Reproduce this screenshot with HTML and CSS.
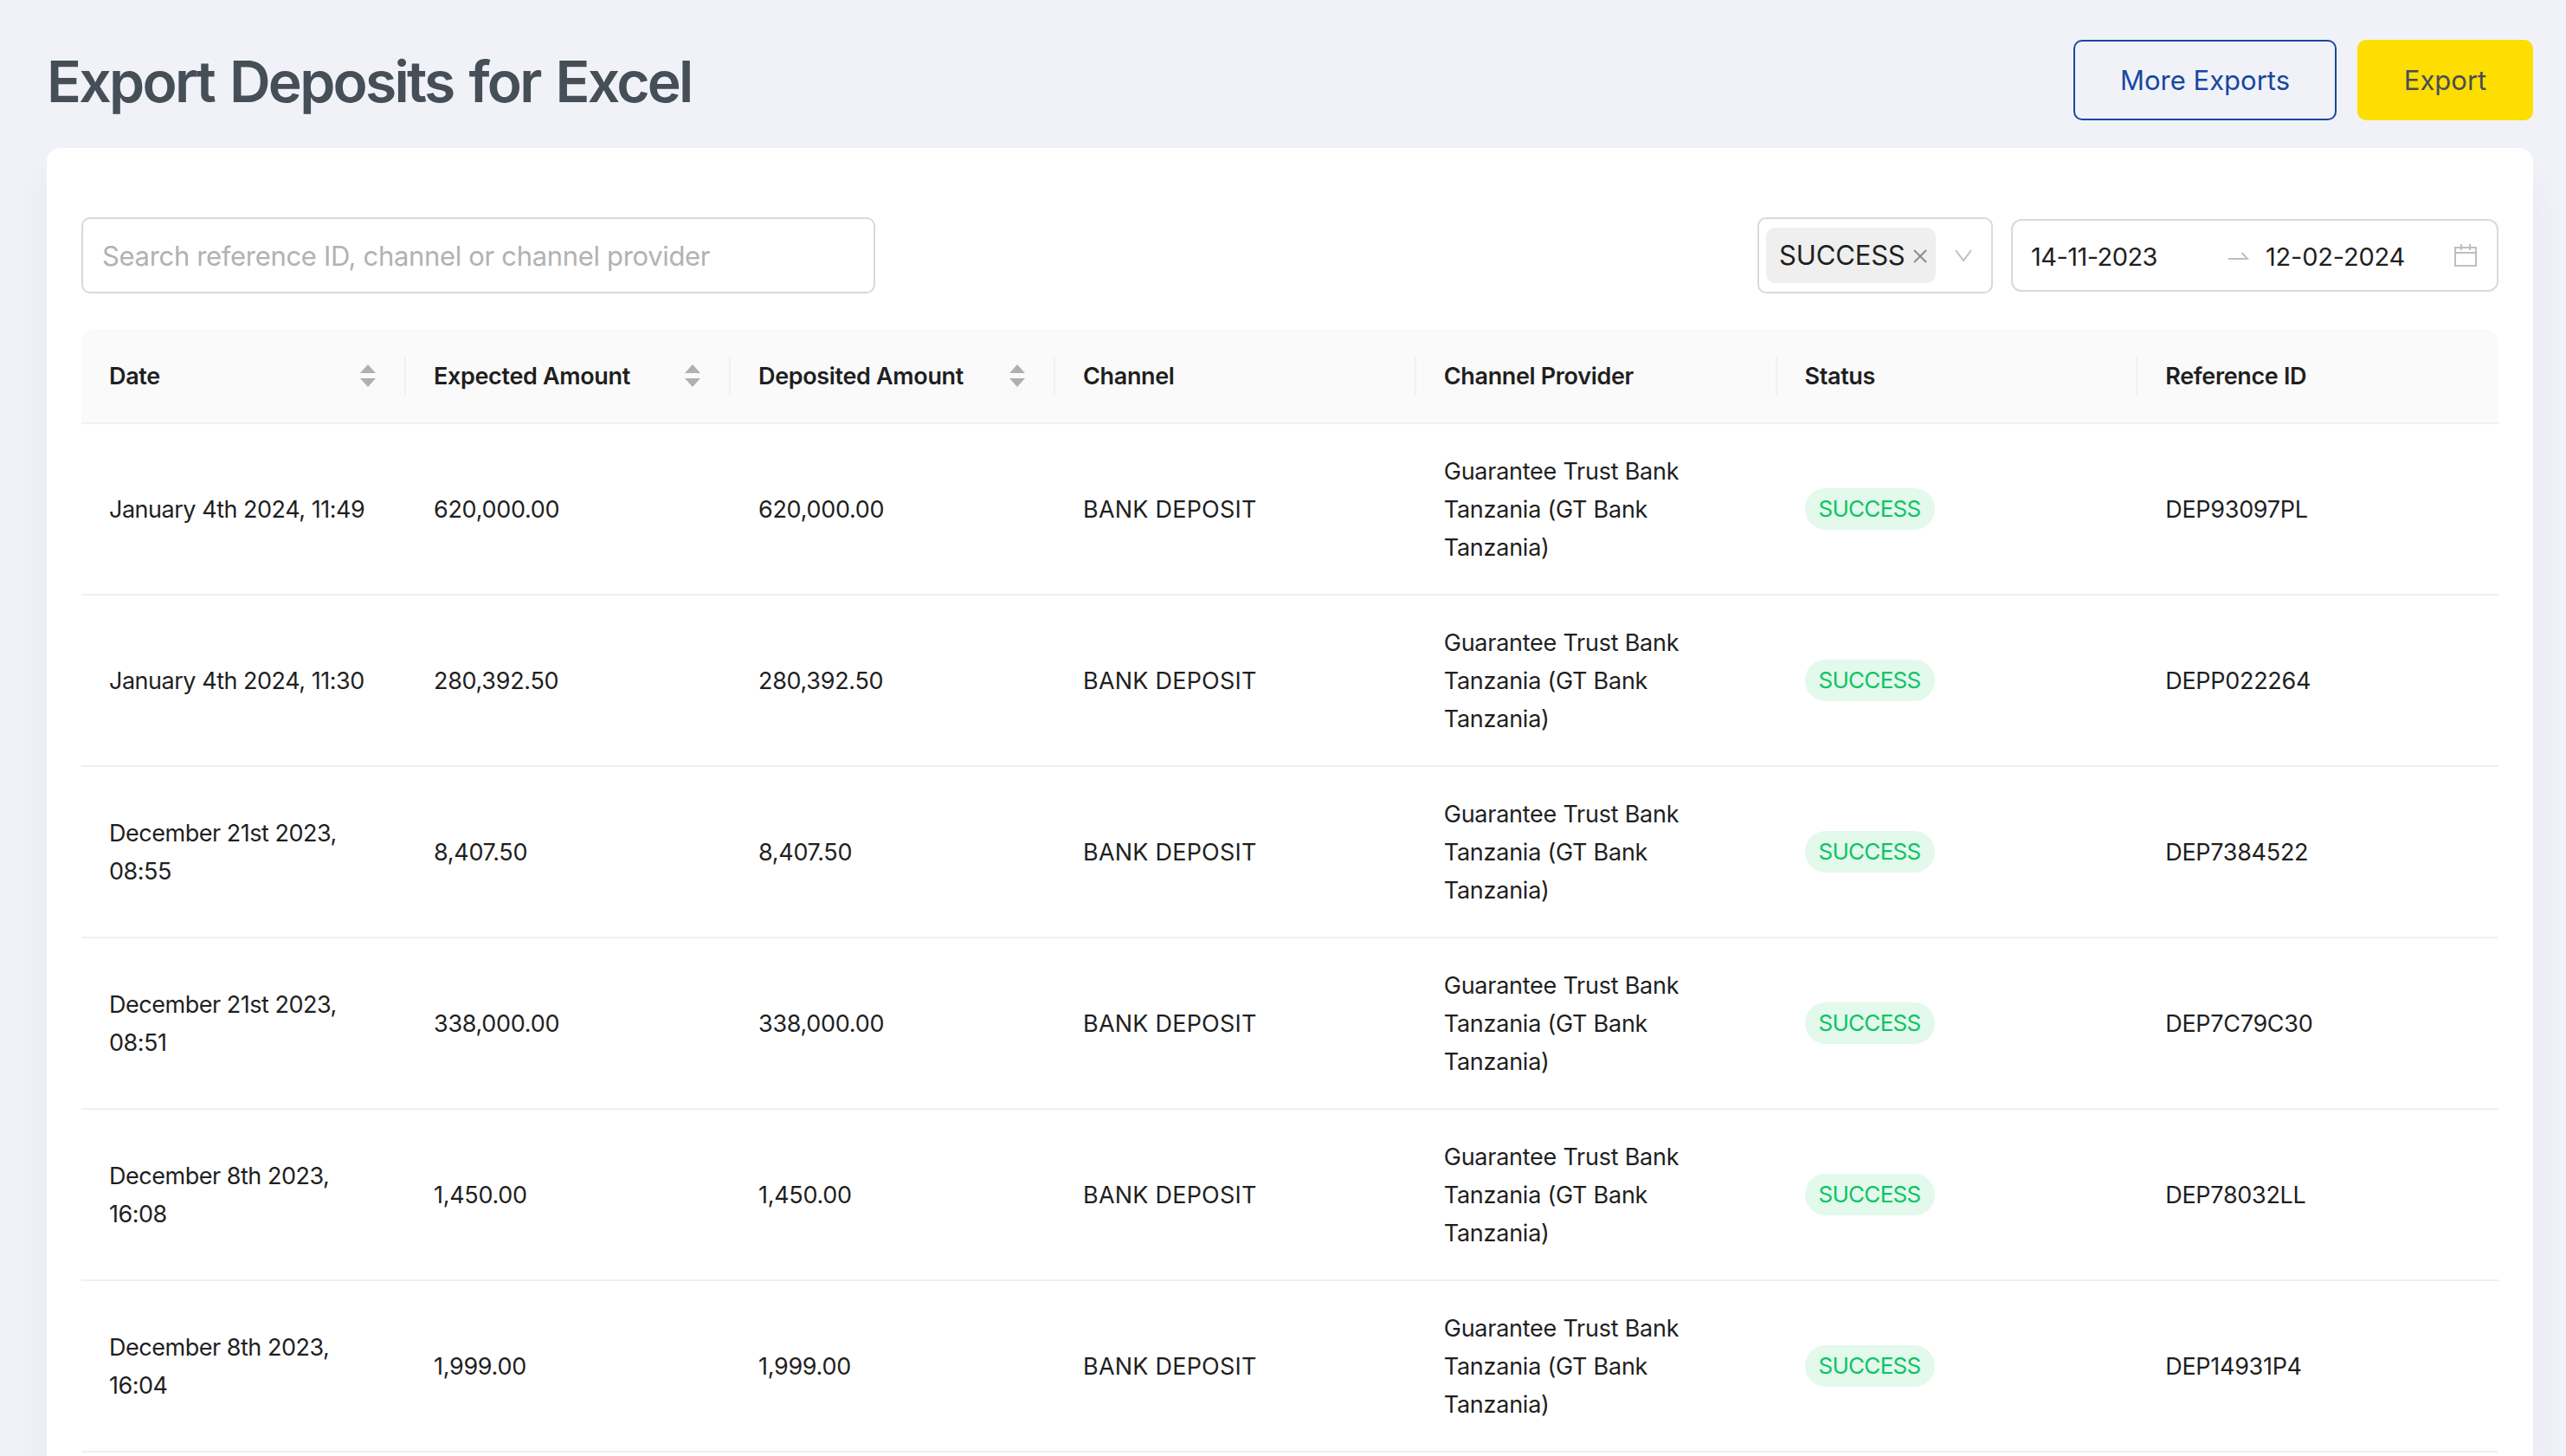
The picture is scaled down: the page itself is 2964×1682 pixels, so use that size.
FILE: index.html
```html
<!DOCTYPE html>
<html lang="en">
<head>
    <meta charset="UTF-8" />
    <meta name="viewport" content="width=device-width, initial-scale=1" />
    <title>Export Deposits for Excel</title>
    <link rel="stylesheet" href="styles.css">
</head>
<body>

<header class="page-header">
  <h1>Export Deposits for Excel</h1>
  <div class="actions">
    <button class="btn btn-outline">More Exports</button>
    <button class="btn btn-primary">Export</button>
  </div>
</header>

<main class="card">
  <div class="filters">
    <input type="text" class="search" placeholder="Search reference ID, channel or channel provider" aria-label="Search" />

    <div class="filters-right">
      <div class="select">
        <span class="tag">
          <span>SUCCESS</span>
          <svg class="tag-close" viewBox="0 0 16 16"><path d="M1 1L15 15M15 1L1 15" /></svg>
        </span>
        <svg class="chevron" viewBox="0 0 20 15"><path d="M1 1L10 13L19 1" /></svg>
      </div>

      <div class="range-picker">
        <span class="range-start">14-11-2023</span>
        <svg class="range-arrow" viewBox="0 0 24 10"><path d="M0 8H22L15.5 1" /></svg>
        <span class="range-end">12-02-2024</span>
        <svg class="calendar" viewBox="0 0 26 26"><path d="M1 4H25V25H1ZM1 10H25M8 0V7M18 0V7" /></svg>
      </div>
    </div>
  </div>

  <table>
    <colgroup>
      <col class="col-sm"><col class="col-sm"><col class="col-sm">
      <col><col><col><col>
    </colgroup>
    <thead>
      <tr>
        <th><div class="sortable">Date <svg class="sorter" viewBox="0 0 18 26"><path d="M9 0L18 10H0ZM9 26L0 16H18Z" /></svg></div></th>
        <th><div class="sortable">Expected Amount <svg class="sorter" viewBox="0 0 18 26"><path d="M9 0L18 10H0ZM9 26L0 16H18Z" /></svg></div></th>
        <th><div class="sortable">Deposited Amount <svg class="sorter" viewBox="0 0 18 26"><path d="M9 0L18 10H0ZM9 26L0 16H18Z" /></svg></div></th>
        <th>Channel</th>
        <th>Channel Provider</th>
        <th>Status</th>
        <th>Reference ID</th>
      </tr>
    </thead>
    <tbody>
      <tr>
        <td class="date">January 4th 2024, 11:49</td>
        <td>620,000.00</td>
        <td>620,000.00</td>
        <td class="channel">BANK DEPOSIT</td>
        <td class="provider">Guarantee Trust Bank Tanzania (GT Bank Tanzania)</td>
        <td class="status-cell"><span class="status">SUCCESS</span></td>
        <td>DEP93097PL</td>
      </tr>
      <tr>
        <td class="date">January 4th 2024, 11:30</td>
        <td>280,392.50</td>
        <td>280,392.50</td>
        <td class="channel">BANK DEPOSIT</td>
        <td class="provider">Guarantee Trust Bank Tanzania (GT Bank Tanzania)</td>
        <td class="status-cell"><span class="status">SUCCESS</span></td>
        <td>DEPP022264</td>
      </tr>
      <tr>
        <td class="date">December 21st 2023, 08:55</td>
        <td>8,407.50</td>
        <td>8,407.50</td>
        <td class="channel">BANK DEPOSIT</td>
        <td class="provider">Guarantee Trust Bank Tanzania (GT Bank Tanzania)</td>
        <td class="status-cell"><span class="status">SUCCESS</span></td>
        <td>DEP7384522</td>
      </tr>
      <tr>
        <td class="date">December 21st 2023, 08:51</td>
        <td>338,000.00</td>
        <td>338,000.00</td>
        <td class="channel">BANK DEPOSIT</td>
        <td class="provider">Guarantee Trust Bank Tanzania (GT Bank Tanzania)</td>
        <td class="status-cell"><span class="status">SUCCESS</span></td>
        <td>DEP7C79C30</td>
      </tr>
      <tr>
        <td class="date">December 8th 2023, 16:08</td>
        <td>1,450.00</td>
        <td>1,450.00</td>
        <td class="channel">BANK DEPOSIT</td>
        <td class="provider">Guarantee Trust Bank Tanzania (GT Bank Tanzania)</td>
        <td class="status-cell"><span class="status">SUCCESS</span></td>
        <td>DEP78032LL</td>
      </tr>
      <tr>
        <td class="date">December 8th 2023, 16:04</td>
        <td>1,999.00</td>
        <td>1,999.00</td>
        <td class="channel">BANK DEPOSIT</td>
        <td class="provider">Guarantee Trust Bank Tanzania (GT Bank Tanzania)</td>
        <td class="status-cell"><span class="status">SUCCESS</span></td>
        <td>DEP14931P4</td>
      </tr>
    </tbody>
  </table>
</main>

</body>
</html>
```
FILE: styles.css
```css
* { box-sizing: border-box; }
body {
  margin: 0;
  height: 100vh;
  overflow: hidden;
  display: flex;
  flex-direction: column;
  padding: 46px 38px 0 54px;
  font-family: Inter, "Liberation Sans", sans-serif;
  font-size: 27px;
  line-height: 44px;
  color: #1f1f1f;
  background: #f1f2f8;
}
svg { display: block; flex: none; fill: none; stroke: #bfbfbf; stroke-width: 2; }

.page-header {
  display: flex;
  justify-content: space-between;
  align-items: flex-start;
  height: 125px;
  flex: none;
}
.page-header h1 {
  margin: 0;
  font-size: 66px;
  font-weight: 620;
  line-height: 97px;
  letter-spacing: -2.75px;
  word-spacing: 4px;
  color: #464e57;
}
.actions { display: flex; gap: 24px; }
.btn {
  height: 93px;
  border-radius: 10px;
  font-family: inherit;
  font-size: 31px;
  padding: 0;
  cursor: pointer;
}
.btn-outline {
  width: 304px;
  background: transparent;
  border: 2px solid #1648a0;
  color: #1648a0;
}
.btn-primary {
  width: 203px;
  background: #fedd00;
  border: none;
  color: #464e57;
}

.card {
  flex: 1;
  padding: 80px 40px 0;
  background: #fff;
  border-radius: 16px 16px 0 0;
  box-shadow: 0 36px 40px rgba(50, 50, 120, 0.06);
}

.filters {
  display: flex;
  justify-content: space-between;
  margin-bottom: 41px;
}
.search {
  width: 917px;
  height: 88px;
  padding: 0 22px;
  border: 2px solid #d9d9d9;
  border-radius: 10px;
  font-family: inherit;
  font-size: 31px;
  letter-spacing: -0.33px;
}
.search::placeholder { color: #b2b2b2; }
.filters-right { display: flex; align-items: center; gap: 21px; }
.select {
  display: flex;
  align-items: center;
  width: 272px;
  height: 88px;
  padding: 0 22px 0 8px;
  border: 2px solid #d9d9d9;
  border-radius: 10px;
}
.tag {
  display: flex;
  align-items: center;
  gap: 9px;
  width: 196px;
  height: 64px;
  padding-left: 15px;
  background: #efefef;
  border-radius: 10px;
  font-size: 31px;
  letter-spacing: -0.15px;
}
.tag-close { width: 16px; height: 16px; margin-top: 2px; stroke: #8c8c8c; }
.chevron { width: 20px; height: 15px; margin-left: auto; }
.range-picker {
  display: flex;
  align-items: center;
  width: 563px;
  height: 84px;
  padding: 2px 23px 0 21px;
  border: 2px solid #d9d9d9;
  border-radius: 12px;
  font-size: 29px;
}
.range-start { width: 228px; padding-top: 2px; letter-spacing: -0.55px; }
.range-end { padding-top: 2px; letter-spacing: -0.2px; }
.range-arrow { width: 24px; height: 10px; margin-right: 19px; }
.calendar { width: 26px; height: 26px; margin: -2px 0 0 auto; }

table {
  width: 100%;
  table-layout: fixed;
  border-collapse: separate;
  border-spacing: 0;
}
.col-sm { width: 375px; }
th {
  position: relative;
  height: 110px;
  padding: 33px 32px 31px;
  text-align: left;
  font-weight: 580;
  letter-spacing: -0.35px;
  background: #fafafa;
  border-bottom: 2px solid #f0f0f0;
}
th:first-child { border-top-left-radius: 16px; }
th:last-child { border-top-right-radius: 16px; }
th:not(:last-child)::after {
  content: "";
  position: absolute;
  top: 32px;
  right: 0;
  width: 2px;
  height: 44px;
  background: #f0f0f0;
}
.sortable { display: flex; justify-content: space-between; align-items: center; }
.sorter { width: 18px; height: 26px; margin: -2px 3px 0 0; fill: #b0b0b0; stroke: none; }
td {
  height: 198px;
  padding: 33px 32px 31px;
  vertical-align: middle;
  letter-spacing: -0.3px;
  border-bottom: 2px solid #f0f0f0;
}
.date { letter-spacing: -0.48px; }
.channel { letter-spacing: 0.22px; }
.provider { padding-right: 60px; letter-spacing: -0.25px; }
.status-cell { padding-top: 32px; padding-bottom: 32px; }
.status {
  display: block;
  width: 150px;
  height: 48px;
  line-height: 48px;
  text-align: center;
  font-size: 26px;
  letter-spacing: -0.7px;
  color: #0ec464;
  background: #e2f9ec;
  border-radius: 24px;
}
```
